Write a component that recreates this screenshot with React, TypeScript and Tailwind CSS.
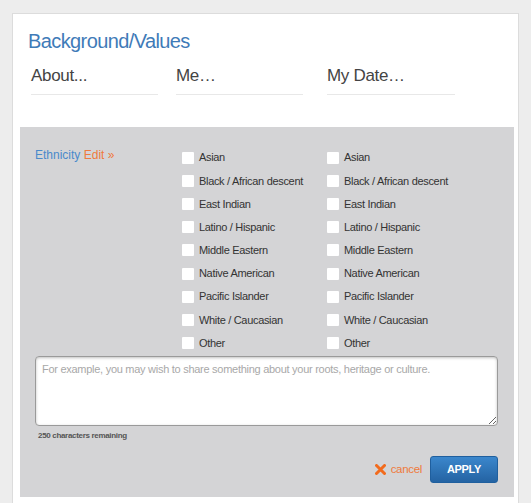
import React from "react";

const options = [
  "Asian",
  "Black / African descent",
  "East Indian",
  "Latino / Hispanic",
  "Middle Eastern",
  "Native American",
  "Pacific Islander",
  "White / Caucasian",
  "Other",
];

function CheckList() {
  return (
    <div className="flex flex-col">
      {options.map((o) => (
        <label key={o} className="flex h-[23.2px] items-center gap-[5px] text-[11px] text-[#333]">
          <span className="h-[12px] w-[12px] rounded-[1px] bg-white" />
          <span>{o}</span>
        </label>
      ))}
    </div>
  );
}

export default function App() {
  return (
    <div className="min-h-[503px] bg-[#ededed] pl-[12px] pt-[13px] font-['Liberation_Sans',Arial,sans-serif] tracking-[-0.02em]">
      <div className="w-[507px] border border-b-0 border-[#dcdcdc] bg-white pb-[6px] pl-[7px] pr-[4px]">
        <h2 className="pl-[8px] pt-[15px] text-[20px] leading-[24px] tracking-[-0.03em] text-[#3f7bb8]">Background/Values</h2>

        <div className="mt-[12px] flex pl-[11px] text-[17px] leading-[22px] text-[#444]">
          <div className="w-[127px] border-b border-[#e8e8e8] pb-[7px]">About...</div>
          <div className="ml-[18px] w-[127px] border-b border-[#e8e8e8] pb-[7px]">Me…</div>
          <div className="ml-[24px] w-[128px] border-b border-[#e8e8e8] pb-[7px]">My Date…</div>
        </div>

        <div className="mt-[32px] bg-[#d4d4d6] pb-[14px] pl-[15px] pr-[16px] pt-[19px]">
          <div className="flex">
            <div className="w-[147px] pt-[1px] text-[12px] leading-[16px] tracking-normal">
              <span className="text-[#4a8acb]">Ethnicity</span>{" "}
              <span className="text-[#ef7a3c]">Edit »</span>
            </div>
            <div className="w-[145px]">
              <CheckList />
            </div>
            <div>
              <CheckList />
            </div>
          </div>

          <textarea
            className="mt-[1px] block h-[70px] w-[463px] resize-y rounded-[4px] border border-[#9a9a9a] bg-white px-[6px] py-[5px] text-[11px] leading-[14px] tracking-[-0.025em] text-[#333] shadow-[inset_0_1px_3px_rgba(0,0,0,0.25)] outline-none placeholder:text-[#a8a8a8]"
            placeholder="For example, you may wish to share something about your roots, heritage or culture."
          />
          <div className="mt-[5px] pl-[3px] text-[8px] font-bold leading-[10px] text-[#555]">250 characters remaining</div>

          <div className="mt-[15px] flex items-center justify-end">
            <span className="mr-[8px] flex items-center gap-[5px] text-[11.5px] text-[#ef7a3c]">
              <svg width="11" height="11" viewBox="0 0 11 11">
                <path d="M1.5 1.5 L9.5 9.5 M9.5 1.5 L1.5 9.5" stroke="#f26b1d" strokeWidth="3" strokeLinecap="round" />
              </svg>
              cancel
            </span>
            <button className="h-[27px] w-[68px] rounded-[3px] border border-[#1f5f9e] bg-gradient-to-b from-[#3b87cc] to-[#2463a3] text-[11px] font-bold text-white">
              APPLY
            </button>
          </div>
        </div>
      </div>
    </div>
  );
}
